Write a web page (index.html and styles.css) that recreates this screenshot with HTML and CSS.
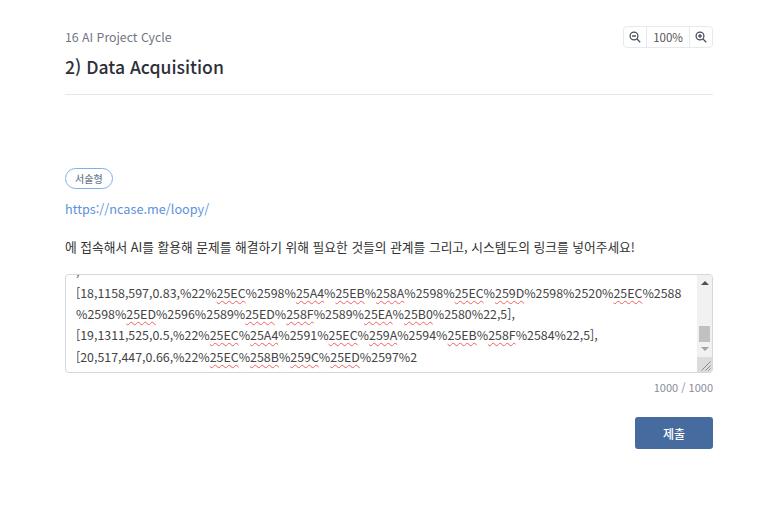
FILE: index.html
```html
<!DOCTYPE html>
<html lang="ko">
<head>
<meta charset="utf-8">
<title>Data Acquisition</title>
<link rel="stylesheet" href="styles.css">
</head>
<body>
<main class="page">
  <header class="head">
    <div class="head-top">
      <div class="crumb">16 AI Project Cycle</div>
      <div class="zoom">
        <button class="zoom-btn" aria-label="축소">
          <svg width="12" height="12" viewBox="0 0 12 12" fill="none" stroke="#4a4f5c" stroke-width="1.3"><circle cx="5" cy="5" r="3.9"/><path d="M3.1 5h3.8M8 8l3.2 3.2"/></svg>
        </button>
        <span class="zoom-val">100%</span>
        <button class="zoom-btn" aria-label="확대">
          <svg width="12" height="12" viewBox="0 0 12 12" fill="none" stroke="#4a4f5c" stroke-width="1.3"><circle cx="5" cy="5" r="3.9"/><path d="M3.1 5h3.8M5 3.1v3.8M8 8l3.2 3.2"/></svg>
        </button>
      </div>
    </div>
    <h1 class="title">2) Data Acquisition</h1>
  </header>

  <section class="question">
    <span class="badge">서술형</span>
    <a class="link">https://ncase.me/loopy/</a>
    <p class="prompt">에 접속해서 AI를 활용해 문제를 해결하기 위해 필요한 것들의 관계를 그리고, 시스템도의 링크를 넣어주세요!</p>

    <div class="answer">
      <div class="answer-text">
        <div class="line">,</div>
        <div class="line">[18,1158,597,0.83,%22%<i>25EC</i>%2598%<i>25A4</i>%<i>25EB</i>%<i>258A</i>%2598%<i>25EC</i>%<i>259D</i>%2598%2520%<i>25EC</i>%2588</div>
        <div class="line">%2598%<i>25ED</i>%2596%2589%<i>25ED</i>%<i>258F</i>%2589%<i>25EA</i>%<i>25B0</i>%2580%22,5],</div>
        <div class="line">[19,1311,525,0.5,%22%<i>25EC</i>%<i>25A4</i>%2591%<i>25EC</i>%<i>259A</i>%2594%<i>25EB</i>%<i>258F</i>%2584%22,5],</div>
        <div class="line">[20,517,447,0.66,%22%<i>25EC</i>%<i>258B</i>%<i>259C</i>%<i>25ED</i>%2597%2</div>
      </div>
      <div class="scrollbar">
        <span class="arrow arrow-up"></span>
        <div class="track"><span class="thumb"></span></div>
        <span class="arrow arrow-down"></span>
        <div class="resizer">
          <svg width="16" height="16" viewBox="0 0 16 16" fill="none" stroke="#8a8a8a" stroke-width="1"><path d="M14.5 5.5l-9 9M14.5 9.5l-5 5M14.5 12.5l-2 2"/></svg>
        </div>
      </div>
    </div>
    <div class="count">1000 / 1000</div>
    <div class="actions"><button class="submit">제출</button></div>
  </section>
</main>
</body>
</html>
```

FILE: styles.css
```css
* { box-sizing: border-box; }
html, body { margin: 0; background: #fff; }
body {
  font-family: "Noto Sans CJK KR", "Noto Sans", sans-serif;
  color: #333;
}
.page { padding: 26px 60px 0 65px; }
.head { border-bottom: 1px solid #e6e6e8; height: 69px; }
.head-top { display: flex; justify-content: space-between; align-items: flex-start; height: 22px; }
.crumb { font-size: 12.3px; line-height: 22px; color: #6f7486; }
.zoom {
  display: flex; height: 22px; border: 1px solid #e8e9ee; border-radius: 4px;
  background: #fff;
}
.zoom-btn {
  width: 22px; padding: 0; border: 0; background: none;
  display: flex; align-items: center; justify-content: center;
}
.zoom-val {
  width: 44px; border: solid #e8e9ee; border-width: 0 1px;
  font-size: 11.5px; line-height: 20px; text-align: center; color: #555;
}
.title {
  margin: 6px 0 0; font-size: 17.6px; line-height: 26px; font-weight: 500; color: #2e3039;
}
.question { display: flex; flex-direction: column; align-items: flex-start; padding-top: 73px; }
.badge {
  height: 21px; padding: 0 9px; border: 1px solid #7fb0ee; border-radius: 11px;
  font-size: 10px; line-height: 19px; color: #6c7a92; font-weight: 500;
}
.link { margin-top: 10px; font-size: 12.7px; line-height: 20px; color: #5b93dc; }
.prompt { margin: 18px 0 0; font-size: 12.75px; line-height: 20px; color: #333; }
.answer {
  margin-top: 17px; width: 648px; height: 99px; display: flex;
  border: 1px solid #d5d6e0; border-radius: 4px; overflow: hidden; background: #fff;
}
.answer-text {
  flex: 1; min-width: 0; height: 97px; padding: 0 10px 4px; overflow: hidden;
  display: flex; flex-direction: column; justify-content: flex-end;
  font-size: 12.4px; color: #444;
}
.line { line-height: 21.33px; white-space: nowrap; flex: none; }
.line i {
  font-style: normal;
  text-decoration: underline wavy #f0605f 1px;
  text-underline-offset: 2px;
}
.scrollbar {
  width: 15px; flex: none; background: #f1f1f1; display: flex; flex-direction: column; align-items: center;
}
.arrow { width: 0; height: 0; border-left: 4px solid transparent; border-right: 4px solid transparent; flex: none; }
.arrow-up { border-bottom: 4px solid #505050; margin-top: 6px; }
.arrow-down { border-top: 4px solid #a3a3a3; margin-bottom: 6px; }
.track { flex: 1; width: 100%; display: flex; flex-direction: column; justify-content: flex-end; padding-bottom: 5px; }
.thumb { display: block; width: 11px; height: 16px; margin: 0 auto; background: #c1c1c1; }
.resizer { width: 15px; height: 15px; flex: none; background: #dcdcdc; overflow: hidden; }
.resizer svg { display: block; margin: -1px 0 0 -1px; }
.count {
  align-self: flex-end; margin-top: 4px; font-size: 11px; line-height: 20px; color: #8a8d99;
}
.actions { align-self: flex-end; margin-top: 20px; }
.submit {
  width: 78px; height: 32px; border: 0; border-radius: 3px; background: #466b9f; color: #fff;
  font-family: inherit; font-size: 12px; font-weight: 500; padding: 0;
}
```
